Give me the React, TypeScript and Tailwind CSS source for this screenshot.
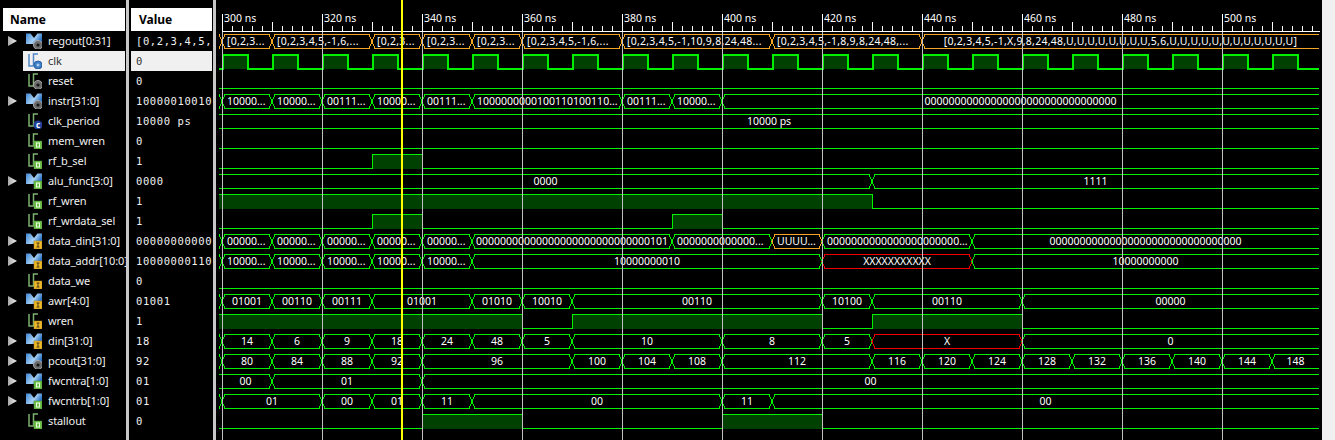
import React from 'react';

type Badge = 'gear' | 'clock' | 'c' | 'o' | 'i';

interface Signal {
  name: string;
  value: string;
  bus?: boolean;
  badge: Badge;
  selected?: boolean;
}

const signals: Signal[] = [
  { name: 'regout[0:31]', value: '[0,2,3,4,5,', bus: true, badge: 'gear' },
  { name: 'clk', value: '0', badge: 'clock', selected: true },
  { name: 'reset', value: '0', badge: 'gear' },
  { name: 'instr[31:0]', value: '10000010010', bus: true, badge: 'gear' },
  { name: 'clk_period', value: '10000 ps', badge: 'c' },
  { name: 'mem_wren', value: '0', badge: 'o' },
  { name: 'rf_b_sel', value: '1', badge: 'o' },
  { name: 'alu_func[3:0]', value: '0000', bus: true, badge: 'o' },
  { name: 'rf_wren', value: '1', badge: 'o' },
  { name: 'rf_wrdata_sel', value: '1', badge: 'o' },
  { name: 'data_din[31:0]', value: '00000000000', bus: true, badge: 'i' },
  { name: 'data_addr[10:0]', value: '10000000110', bus: true, badge: 'i' },
  { name: 'data_we', value: '0', badge: 'i' },
  { name: 'awr[4:0]', value: '01001', bus: true, badge: 'i' },
  { name: 'wren', value: '1', badge: 'i' },
  { name: 'din[31:0]', value: '18', bus: true, badge: 'i' },
  { name: 'pcout[31:0]', value: '92', bus: true, badge: 'gear' },
  { name: 'fwcntra[1:0]', value: '01', bus: true, badge: 'o' },
  { name: 'fwcntrb[1:0]', value: '01', bus: true, badge: 'o' },
  { name: 'stallout', value: '0', badge: 'o' },
];

const GREEN = '#00f000';
const ORANGE = '#f5a623';
const RED = '#f00000';
const WAVE_START = 219;
const WAVE_END = 1319;

const rowTop = (i: number) => 31 + i * 20;

// [x of the transition, label, colour]
type Seg = [number, string, string?];

const buses: { row: number; segs: Seg[] }[] = [
  {
    row: 0,
    segs: [
      [222, '[0,2,3...', ORANGE],
      [272, '[0,2,3,4,5,-1,6,...', ORANGE],
      [372, '[0,2,3...', ORANGE],
      [422, '[0,2,3...', ORANGE],
      [472, '[0,2,3...', ORANGE],
      [522, '[0,2,3,4,5,-1,6,...', ORANGE],
      [622, '[0,2,3,4,5,-1,10,9,8,24,48...', ORANGE],
      [772, '[0,2,3,4,5,-1,8,9,8,24,48,...', ORANGE],
      [922, '[0,2,3,4,5,-1,X,9,8,24,48,U,U,U,U,U,U,U,U,5,6,U,U,U,U,U,U,U,U,U,U,U,U]', ORANGE],
    ],
  },
  {
    row: 3,
    segs: [
      [222, '10000...'],
      [272, '10000...'],
      [322, '00111...'],
      [372, '10000...'],
      [422, '00111...'],
      [472, '1000000000100110100110...'],
      [622, '00111...'],
      [672, '10000...'],
      [722, '00000000000000000000000000000000'],
    ],
  },
  { row: 4, segs: [[WAVE_START, '10000 ps']] },
  { row: 7, segs: [[WAVE_START, '0000'], [872, '1111']] },
  {
    row: 10,
    segs: [
      [222, '00000...'],
      [272, '00000...'],
      [322, '00000...'],
      [372, '00000...'],
      [422, '00000...'],
      [472, '00000000000000000000000000000101'],
      [672, '0000000000000...'],
      [772, 'UUUU...', ORANGE],
      [822, '0000000000000000000000...'],
      [972, '00000000000000000000000000000000'],
    ],
  },
  {
    row: 11,
    segs: [
      [222, '10000...'],
      [272, '10000...'],
      [322, '10000...'],
      [372, '10000...'],
      [422, '10000...'],
      [472, '10000000010'],
      [822, 'XXXXXXXXXXX', RED],
      [972, '10000000000'],
    ],
  },
  {
    row: 13,
    segs: [
      [222, '01001'],
      [272, '00110'],
      [322, '00111'],
      [372, '01001'],
      [472, '01010'],
      [522, '10010'],
      [572, '00110'],
      [822, '10100'],
      [872, '00110'],
      [1022, '00000'],
    ],
  },
  {
    row: 15,
    segs: [
      [222, '14'],
      [272, '6'],
      [322, '9'],
      [372, '18'],
      [422, '24'],
      [472, '48'],
      [522, '5'],
      [572, '10'],
      [722, '8'],
      [822, '5'],
      [872, 'X', RED],
      [1022, '0'],
    ],
  },
  {
    row: 16,
    segs: [
      [222, '80'],
      [272, '84'],
      [322, '88'],
      [372, '92'],
      [422, '96'],
      [572, '100'],
      [622, '104'],
      [672, '108'],
      [722, '112'],
      [872, '116'],
      [922, '120'],
      [972, '124'],
      [1022, '128'],
      [1072, '132'],
      [1122, '136'],
      [1172, '140'],
      [1222, '144'],
      [1272, '148'],
    ],
  },
  { row: 17, segs: [[WAVE_START, '00'], [272, '01'], [422, '00']] },
  {
    row: 18,
    segs: [
      [222, '01'],
      [322, '00'],
      [372, '01'],
      [422, '11'],
      [472, '00'],
      [722, '11'],
      [772, '00'],
    ],
  },
];

// high intervals of the single-bit signals
const bits: { row: number; high: [number, number][] }[] = [
  { row: 2, high: [] },
  { row: 5, high: [] },
  { row: 6, high: [[372, 422]] },
  { row: 8, high: [[WAVE_START, 872]] },
  { row: 9, high: [[372, 422], [672, 722]] },
  { row: 12, high: [] },
  { row: 14, high: [[WAVE_START, 522], [572, 822], [872, 1022]] },
  { row: 19, high: [[422, 522], [722, 822]] },
];

const clockHigh: [number, number][] = [];
for (let x = 222; x < WAVE_END; x += 50) clockHigh.push([x, Math.min(x + 25, WAVE_END)]);

function bitPath(top: number, high: [number, number][]) {
  const hi = top + 3.5;
  const lo = top + 17.5;
  let d = high.length && high[0][0] === WAVE_START ? `M${WAVE_START} ${hi}` : `M${WAVE_START} ${lo}`;
  high.forEach(([a, b]) => {
    if (a !== WAVE_START) d += `L${a + 0.5} ${lo}L${a + 0.5} ${hi}`;
    if (b !== WAVE_END) d += `L${b + 0.5} ${hi}L${b + 0.5} ${lo}`;
    else d += `L${b} ${hi}`;
  });
  if (!high.length || high[high.length - 1][1] !== WAVE_END) d += `L${WAVE_END} ${lo}`;
  return d;
}

function BitWave({ row, high, width = 1 }: { row: number; high: [number, number][]; width?: number }) {
  const top = rowTop(row);
  return (
    <g>
      {high.map(([a, b]) => (
        <rect key={a} x={a} y={top + 3} width={b - a} height={15} fill="#004000" />
      ))}
      <path d={bitPath(top, high)} fill="none" stroke={GREEN} strokeWidth={width} shapeRendering="crispEdges" />
    </g>
  );
}

function BusWave({ row, segs }: { row: number; segs: Seg[] }) {
  const t = rowTop(row);
  const hi = t + 3.5;
  const lo = t + 17.5;
  const mid = t + 10.5;
  return (
    <g>
      {segs[0][0] !== WAVE_START && (
        <path
          d={`M${WAVE_START} ${hi}L${segs[0][0]} ${mid}L${WAVE_START} ${lo}`}
          fill="none"
          stroke={segs[0][2] || GREEN}
          shapeRendering="crispEdges"
        />
      )}
      {segs.map(([a, label, color], i) => {
        const b = i + 1 < segs.length ? segs[i + 1][0] : WAVE_END;
        const openL = a === WAVE_START;
        const openR = b === WAVE_END;
        const d =
          `M${openL ? a : a + 3} ${hi}L${openR ? b : b - 3} ${hi}` +
          (openR ? '' : `L${b} ${mid}`) +
          `${openR ? 'M' : 'L'}${openR ? b : b - 3} ${lo}L${openL ? a : a + 3} ${lo}` +
          (openL ? '' : `L${a} ${mid}L${a + 3} ${hi}`);
        const clipped = label.endsWith('...');
        return (
          <g key={a}>
            <path d={d} fill="none" stroke={color || GREEN} shapeRendering="crispEdges" />
            <text
              x={clipped ? a + 5 : (a + b) / 2}
              y={t + 14}
              textAnchor={clipped ? 'start' : 'middle'}
              className={`fill-white text-[10.5px] font-['Noto_Sans',sans-serif] ${row === 0 ? 'tracking-[0.25px]' : ''}`}
            >
              {label}
            </text>
          </g>
        );
      })}
    </g>
  );
}

function Ruler() {
  const ticks = [];
  for (let x = 222; x < WAVE_END; x += 10) {
    const off = x - 222;
    const y1 = off % 100 === 0 ? 14 : off % 50 === 0 ? 22 : 26;
    ticks.push(<line key={x} x1={x + 0.5} x2={x + 0.5} y1={y1} y2={31} stroke="#fff" />);
  }
  const labels = [];
  for (let k = 0; k <= 10; k++) {
    labels.push(
      <text
        key={k}
        x={224 + k * 100}
        y={22}
        className="fill-white text-[10.5px] font-['Noto_Sans',sans-serif]"
      >
        {300 + k * 20} ns
      </text>,
    );
  }
  return (
    <g>
      <line x1={222} x2={1320} y1={31.5} y2={31.5} stroke="#fff" />
      {ticks}
      {labels}
    </g>
  );
}

function Waveform() {
  const grid = [];
  for (let k = 0; k <= 10; k++) {
    grid.push(<line key={k} x1={222.5 + k * 100} x2={222.5 + k * 100} y1={32} y2={440} stroke="#c0c0c0" />);
  }
  return (
    <svg viewBox="216 0 1106 440" className="block h-[440px] w-[1106px] shrink-0">
      <Ruler />
      <BusWave row={buses[0].row} segs={buses[0].segs} />
      <BitWave row={1} high={clockHigh} width={2} />
      {bits.map((b) => (
        <BitWave key={b.row} row={b.row} high={b.high} />
      ))}
      {buses.slice(1).map((b) => (
        <BusWave key={b.row} row={b.row} segs={b.segs} />
      ))}
      {grid}
      <rect x={401} y={0} width={2} height={440} fill="#ffff00" />
    </svg>
  );
}

function SignalBadge({ type }: { type: Badge }) {
  switch (type) {
    case 'clock':
      return (
        <g>
          <circle cx="12" cy="12" r="4" fill="#3f7fc8" stroke="#2a5f9f" />
          <path d="M10.5 12h3M12 10.5v3" stroke="#cfe4fa" />
        </g>
      );
    case 'c':
      return (
        <g>
          <circle cx="12" cy="12" r="4.5" fill="#1f3f9a" />
          <text x="12" y="14.5" textAnchor="middle" className="fill-white text-[8px] font-bold font-['Noto_Sans',sans-serif]">
            c
          </text>
        </g>
      );
    case 'o':
      return (
        <g>
          <rect x="8" y="8" width="8" height="8" fill="#6fc04a" stroke="#4a9030" strokeWidth="0.5" />
          <rect x="10.5" y="10" width="3" height="4" fill="none" stroke="#e8ffe0" />
        </g>
      );
    case 'i':
      return (
        <g>
          <rect x="8" y="8" width="8" height="8" fill="#eeb92a" stroke="#b08418" strokeWidth="0.5" />
          <path d="M10.5 10h3M10.5 14h3M12 10v4" stroke="#4a3a10" />
        </g>
      );
    default:
      return (
        <g>
          <circle cx="12" cy="12" r="4.5" fill="#6c6c6c" stroke="#a8a8a8" />
          <circle cx="12" cy="12" r="1.6" fill="#161616" />
        </g>
      );
  }
}

function SignalIcon({ bus, badge }: { bus?: boolean; badge: Badge }) {
  const wave = badge === 'clock' ? '#4f86c6' : '#7db070';
  return (
    <svg viewBox="0 0 16 16" className="h-4 w-4 shrink-0">
      <defs>
        <linearGradient id="busFill" x1="0" y1="0" x2="1" y2="0.4">
          <stop offset="0" stopColor="#3f86d6" />
          <stop offset="0.6" stopColor="#a9d2f4" />
          <stop offset="1" stopColor="#2f76c6" />
        </linearGradient>
      </defs>
      {bus ? (
        <path d="M0 0.5L4.5 0.5L8 5L11.5 0.5L16 0.5V11H0Z" fill="url(#busFill)" />
      ) : (
        <path d="M3 1V13H7.5V1H12" fill="none" stroke={wave} strokeWidth="1.5" />
      )}
      <SignalBadge type={badge} />
    </svg>
  );
}

function NameColumn() {
  return (
    <div className="flex w-[125px] shrink-0 flex-col pl-[3px]">
      <div className="mt-2 flex h-[23px] items-center bg-white pl-[7px] text-[12px] font-bold text-black">Name</div>
      {signals.map((s) => (
        <div key={s.name} className="flex h-5 items-center">
          <div className="flex w-5 shrink-0 pl-[5px]">
            {s.bus && (
              <svg viewBox="0 0 9 10" className="h-[10px] w-[9px]">
                <defs>
                  <linearGradient id="arrowFill" x1="0" y1="0" x2="1" y2="0">
                    <stop offset="0" stopColor="#a8a8a8" />
                    <stop offset="1" stopColor="#f0f0f0" />
                  </linearGradient>
                </defs>
                <path d="M0 0L9 5L0 10Z" fill="url(#arrowFill)" />
              </svg>
            )}
          </div>
          <div className={`flex h-5 flex-1 items-center gap-[6px] pl-[3px] ${s.selected ? 'bg-[#f0f0f0] text-[#333333]' : 'text-[#f0f0f0]'}`}>
            <SignalIcon bus={s.bus} badge={s.badge} />
            <span className="whitespace-nowrap text-[11px] tracking-[-0.1px]">{s.name}</span>
          </div>
        </div>
      ))}
    </div>
  );
}

function ValueColumn() {
  return (
    <div className="ml-[2px] flex w-[81px] shrink-0 flex-col">
      <div className="mt-2 flex h-[23px] items-center bg-white pl-2 text-[12px] font-bold text-black">Value</div>
      {signals.map((s) => (
        <div
          key={s.name}
          className={`flex h-5 items-center whitespace-nowrap pl-[5px] pt-[2px] font-['DejaVu_Sans_Mono',monospace] text-[10.5px] tracking-[0.6px] ${
            s.selected ? 'bg-[#f0f0f0] text-[#333333]' : 'text-[#f0f0f0]'
          }`}
        >
          {s.value}
        </div>
      ))}
    </div>
  );
}

export default function App() {
  return (
    <div className="flex h-[440px] w-[1335px] overflow-hidden bg-black font-['Noto_Sans',sans-serif]">
      <NameColumn />
      <div className="ml-[1px] w-[3px] shrink-0 bg-[#c8c8c8]" />
      <ValueColumn />
      <div className="ml-[1px] w-[3px] shrink-0 bg-[#c8c8c8]" />
      <Waveform />
      <div className="flex-1 bg-[#f0f0f0]" />
    </div>
  );
}
